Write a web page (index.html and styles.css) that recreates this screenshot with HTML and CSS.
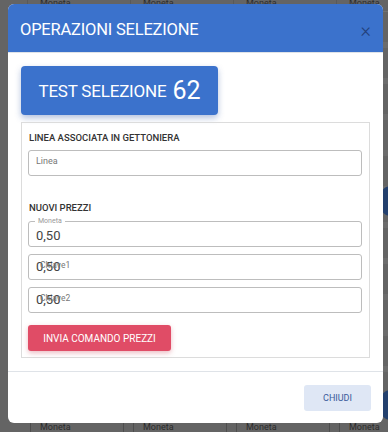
FILE: index.html
```html
<!DOCTYPE html>
<html lang="it">
<head>
    <meta charset="UTF-8">
    <meta name="viewport" content="width=device-width, initial-scale=1.0">
    <title>Operazioni selezione</title>
    <link rel="stylesheet" href="styles.css">
</head>
<body>
    <div class="page">
        <div class="cell"><span>Moneta</span></div>
        <div class="cell"><span>Moneta</span></div>
        <div class="cell"><span>Moneta</span></div>
        <div class="cell"><span>Moneta</span></div>
        <div class="cell cell-mid"></div>
        <div class="cell cell-mid"></div>
        <div class="cell cell-mid"></div>
        <div class="cell cell-mid"></div>
        <div class="cell cell-box"><span>Moneta</span></div>
        <div class="cell cell-box"><span>Moneta</span></div>
        <div class="cell cell-box"><span>Moneta</span></div>
        <div class="cell cell-box"><span>Moneta</span></div>
    </div>
    <div class="dot dot-top"></div>
    <div class="dot dot-bottom"></div>

    <div class="modal">
        <div class="modal-header">
            <h1>OPERAZIONI SELEZIONE</h1>
            <span class="close">&times;</span>
        </div>

        <div class="modal-body">
            <div class="btn-test">TEST SELEZIONE <strong>62</strong></div>

            <div class="card">
                <h2>LINEA ASSOCIATA IN GETTONIERA</h2>
                <div class="input input-placeholder">Linea</div>

                <h2 class="prices-title">NUOVI PREZZI</h2>
                <div class="input input-legend">
                    <span class="legend">Moneta</span>
                    <span class="value">0,50</span>
                </div>
                <div class="input input-overlap">
                    <span class="label">Chiave1</span>
                    <span class="value">0,50</span>
                </div>
                <div class="input input-overlap">
                    <span class="label">Chiave2</span>
                    <span class="value">0,50</span>
                </div>

                <div class="btn-send">INVIA COMANDO PREZZI</div>
            </div>
        </div>

        <div class="modal-footer">
            <div class="btn-close">CHIUDI</div>
        </div>
    </div>
</body>
</html>
```

FILE: styles.css
```css
:root {
    --primary-color: #3b72cc;
    --danger-color: #e04c66;
    --text-color: #333;
    --border-color: #bdbdbd;
    --overlay-bg: #646464;
}

* {
    margin: 0;
    padding: 0;
    box-sizing: border-box;
}

body {
    font-family: Roboto, 'Liberation Sans', Arial, sans-serif;
    color: var(--text-color);
    background-color: var(--overlay-bg);
    width: 388px;
    height: 432px;
    overflow: hidden;
}

/* page behind the overlay */
.page {
    display: grid;
    grid-template-columns: repeat(4, 103px);
    grid-template-rows: 12px 1fr 22px;
    height: 432px;
    margin-left: 27px;
}

.cell {
    border-left: 1px solid #595959;
    border-bottom: 1px solid #727272;
}

.cell span {
    display: block;
    padding-left: 12px;
    font-size: 9px;
    line-height: 10px;
    color: #2c2c2c;
    margin-top: -2px;
}

.cell-mid {
    background: repeating-linear-gradient(180deg, transparent 0 30px, #6c6c6c 30px 36px);
}

.cell-box {
    border: none;
    margin: 4px 6px 0 3px;
    border: 1px solid #4e4e4e;
    border-bottom: none;
    border-radius: 3px 3px 0 0;
}

.cell-box span {
    display: inline-block;
    background: var(--overlay-bg);
    margin: -6px 0 0 6px;
    padding: 0 3px;
}

.dot {
    position: absolute;
    right: -14px;
    width: 22px;
    height: 30px;
    border-radius: 12px;
    background: #23406e;
}

.dot-top { top: 186px; }
.dot-bottom { top: 390px; }

/* modal */
.modal {
    position: absolute;
    left: 8px;
    top: 4px;
    width: 375px;
    height: 419px;
    background: white;
    border-radius: 6px;
    overflow: hidden;
    display: flex;
    flex-direction: column;
}

.modal-header {
    flex-shrink: 0;
    height: 49px;
    background: var(--primary-color);
    border-bottom: 1px solid #dfe3e8;
    display: flex;
    align-items: center;
    justify-content: space-between;
    padding: 0 12px;
}

.modal-header h1 {
    font-size: 16.5px;
    font-weight: 400;
    color: white;
    letter-spacing: -0.2px;
    margin-top: 2px;
}

.close {
    font-size: 20px;
    font-weight: 300;
    color: #23407a;
    line-height: 1;
    margin-top: 3px;
}

.modal-body {
    flex-shrink: 0;
    padding: 13px;
    border-bottom: 1px solid #dfe3e8;
}

.btn-test {
    width: 197px;
    height: 49px;
    background: var(--primary-color);
    color: white;
    border-radius: 4px;
    box-shadow: 0 3px 6px rgba(40, 80, 160, 0.35);
    display: flex;
    align-items: center;
    justify-content: center;
    font-size: 17px;
    letter-spacing: -0.2px;
    gap: 6px;
    margin-bottom: 7px;
}

.btn-test strong {
    font-size: 25px;
    font-weight: 400;
    letter-spacing: 0;
}

.card {
    border: 1px solid #dcdcdc;
    padding: 7px 7px 6px 6px;
}

.card h2 {
    font-size: 9.5px;
    font-weight: 500;
    color: #333;
    margin: 2px 0 7px 1px;
}

.card .prices-title {
    margin-top: 26px;
    margin-bottom: 8px;
}

.input {
    position: relative;
    height: 26px;
    border: 1px solid var(--border-color);
    border-radius: 3px;
    margin-bottom: 7px;
    padding-left: 7px;
    display: flex;
    align-items: center;
}

.input-placeholder {
    font-size: 9px;
    color: #777;
    align-items: flex-start;
    padding-top: 5px;
}

.value {
    font-size: 13px;
    color: #444;
}

.input-legend .value {
    margin-top: 2px;
}

.legend {
    position: absolute;
    left: 6px;
    top: -5px;
    background: white;
    padding: 0 3px;
    font-size: 7px;
    line-height: 8px;
    color: #999;
}

.input-overlap .value {
    margin-top: -2px;
}

.input-overlap .label {
    position: absolute;
    left: 11px;
    top: 5px;
    font-size: 8.5px;
    color: #777;
}

.btn-send {
    width: 143px;
    height: 26px;
    margin-top: 12px;
    background: var(--danger-color);
    color: white;
    border-radius: 3px;
    box-shadow: 0 2px 5px rgba(200, 60, 80, 0.35);
    font-size: 10px;
    display: flex;
    align-items: center;
    justify-content: center;
}

.modal-footer {
    flex: 1;
    display: flex;
    justify-content: flex-end;
    padding: 13px 12px;
}

.btn-close {
    width: 67px;
    height: 26px;
    background: #dfe7f5;
    color: #3a5a9a;
    border-radius: 3px;
    font-size: 9px;
    display: flex;
    align-items: center;
    justify-content: center;
}
```
